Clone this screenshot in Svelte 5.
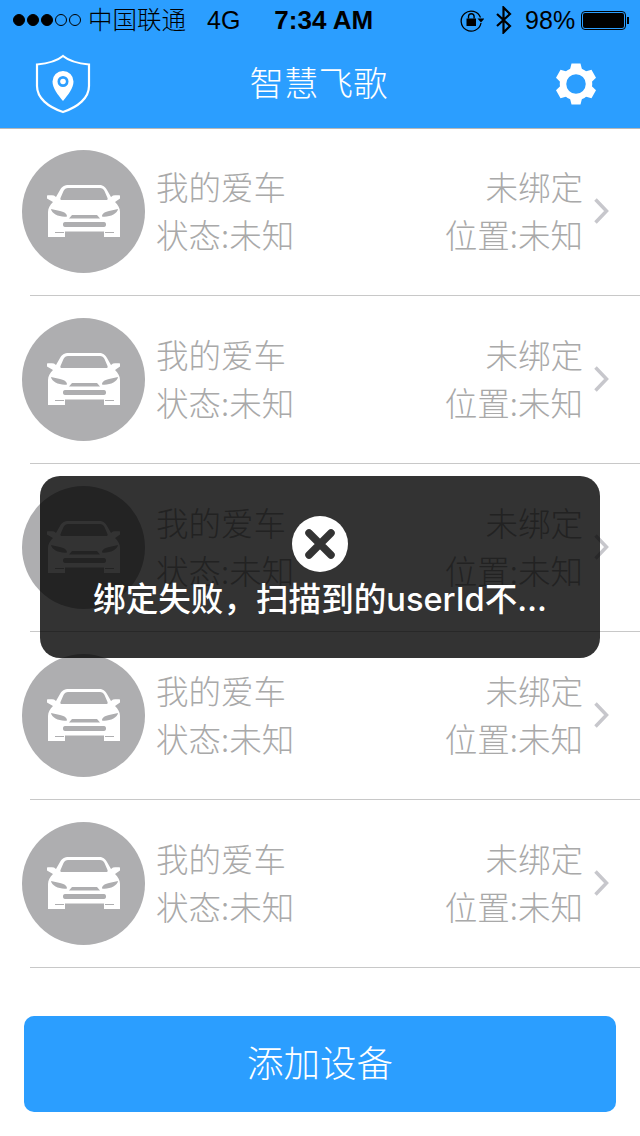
<script>
  const rows = [0, 1, 2, 3, 4];
  const teeth = [0, 60, 120, 180, 240, 300];
</script>

<div class="page">
  <header class="top">
    <div class="status">
      <div class="signal">
        <i class="on"></i><i class="on"></i><i class="on"></i><i></i><i></i>
      </div>
      <span class="carrier">中国联通</span>
      <span class="net">4G</span>
      <span class="time">7:34 AM</span>
      <svg class="lock" width="24" height="24" viewBox="0 0 24 24">
        <path d="M20.5 9.5A10 10 0 1 0 21 15" fill="none" stroke="#000" stroke-width="1.3" />
        <path d="M17.5 10.5h7l-3.500 4z" fill="#000" />
        <rect x="6.500" y="10.500" width="9.500" height="7.500" fill="#000" />
        <path d="M8.500 10.500V8.500a2.800 2.800 0 0 1 5.600 0v2" fill="none" stroke="#000" stroke-width="1.400" />
      </svg>
      <svg class="bt" width="18" height="28" viewBox="0 0 18 28">
        <path d="M2 8l13 12-6.500 6.500V1.500L15 8 2 20" fill="none" stroke="#000" stroke-width="2.200" />
      </svg>
      <span class="pct">98%</span>
      <div class="battery"><div class="cell"></div></div>
      <div class="nub"></div>
    </div>
    <nav class="bar">
      <svg class="shield" width="56" height="60" viewBox="0 0 56 60">
        <path d="M28 2c6 5 15 7.500 26 8.500V32c0 12-11 21-26 26C13 53 2 44 2 32V10.500C13 9.500 22 7 28 2z" fill="none" stroke="#fff" stroke-width="2.200" />
        <path fill-rule="evenodd" d="M28 47C23 41 17.500 34 17.500 27.500a10.500 10.500 0 0 1 21 0C38.500 34 33 41 28 47zM28 22a5.500 5.500 0 1 0 0 11 5.500 5.500 0 0 0 0-11z" fill="#fff" />
        <circle cx="28" cy="27.500" r="2.800" fill="#fff" />
      </svg>
      <h1>智慧飞歌</h1>
      <svg class="gear" width="42" height="42" viewBox="0 0 42 42">
        <circle cx="21" cy="21" r="13" fill="none" stroke="#fff" stroke-width="6.500" />
        {#each teeth as angle (angle)}
          <path d="M14.500 8.500L16.500 0.500H25.500L27.500 8.500z" fill="#fff" transform="rotate({angle} 21 21)" />
        {/each}
      </svg>
    </nav>
  </header>

  <ul class="list">
    {#each rows as row (row)}
      <li class="row">
        <div class="avatar">
          <svg width="123" height="123" viewBox="0 0 123 123">
            <path
              fill="#fff"
              fill-rule="evenodd"
              d="M47 35h30c4 0 6 1.500 8 5l4 7 2-1.500c3-.5 6-.5 7 0v3l-5 3.500c3 3 5 6 5 10v25H82V81.500H43V87H26V62c0-4 2-7 5-10l-6-3.500v-3c1-.5 4-.5 7 0l2 1.500 4-7c2-3.500 4-5 9-5zM46 38c-2 0-3.500 1-4.500 3l-3 7c-.5 1.500 0 2 1.500 2h44c1.500 0 2-.5 1.500-2l-3-7c-1-2-2.500-3-4.500-3zM29 59c.5 5 9 8.500 16 7.500 0-2.500-2-4.500-7-5.500-3-.5-6-1.500-9-2zM96 59c-3 .5-6 1.500-9 2-5 1-7 3-7 5.500 7 1 15.500-2.500 16-7.500zM50 65l-3 3.500h31L75 65zM43 72c-1.500 0-2 1-2 2.500s.5 2.500 2 2.500h39c1.500 0 2-1 2-2.500S83.500 72 82 72zM33 82h9v1h-9zM83 82h9v1h-9z"
            />
          </svg>
        </div>
        <div class="info">
          <div class="line">
            <span>我的爱车</span>
            <span>未绑定</span>
          </div>
          <div class="line">
            <span>状态:未知</span>
            <span>位置:未知</span>
          </div>
        </div>
        <svg class="chevron" width="18" height="28" viewBox="0 0 18 28">
          <path d="M3.500 2.500L14.500 14 3.500 25.500" fill="none" stroke="#c7c7cc" stroke-width="3.500" />
        </svg>
      </li>
    {/each}
  </ul>

  <button class="add">添加设备</button>

  <div class="toast">
    <div class="badge">
      <svg width="32" height="32" viewBox="0 0 32 32">
        <path d="M5 5l22 22M27 5L5 27" stroke="#333" stroke-width="7.500" stroke-linecap="round" />
      </svg>
    </div>
    <p>绑定失败，扫描到的userId不…</p>
  </div>
</div>

<style>
  :global(body) {
    background: #fff;
    font-family: "Noto Sans CJK SC", "Liberation Sans", sans-serif;
  }

  .page {
    height: 1136px;
    overflow: hidden;
    position: relative;
    width: 640px;
  }

  .top {
    background: #2b9eff;
    border-bottom: 1px solid #b8b8b8;
    height: 128px;
  }

  .status {
    align-items: center;
    color: #000;
    display: flex;
    font-family: "Liberation Sans", "Noto Sans CJK SC", sans-serif;
    font-size: 25px;
    height: 40px;
    padding-left: 13px;
  }

  .signal {
    display: flex;
    gap: 2px;
  }

  .signal i {
    border: 1px solid #000;
    border-radius: 50%;
    box-sizing: border-box;
    height: 12px;
    width: 12px;
  }

  .signal i.on {
    background: #000;
  }

  .carrier {
    font-family: "Noto Sans CJK SC", sans-serif;
    font-size: 24.5px;
    font-weight: 300;
    margin: 0 0 4px 7px;
  }

  .net {
    margin-left: 21px;
  }

  .time {
    font-size: 26px;
    font-weight: 700;
    margin-left: 34px;
  }

  .lock {
    margin-left: 87px;
  }

  .bt {
    margin-left: 11px;
  }

  .pct {
    margin-left: 12px;
  }

  .battery {
    border: 1px solid #000;
    border-radius: 4px;
    box-sizing: border-box;
    height: 19px;
    margin-left: 6px;
    padding: 1px;
    width: 45px;
  }

  .cell {
    background: #000;
    border-radius: 2px;
    height: 100%;
  }

  .nub {
    background: #000;
    height: 7px;
    margin-left: 1px;
    width: 2px;
  }

  .bar {
    align-items: center;
    display: grid;
    grid-template-columns: 1fr auto 1fr;
    height: 87px;
    padding: 0 43px 0 35px;
  }

  .gear {
    justify-self: end;
  }

  h1 {
    color: #fff;
    font-size: 34.5px;
    font-weight: 300;
    margin: 0 0 6px 5px;
  }

  .list {
    list-style: none;
    margin: 0;
    padding: 0;
  }

  .row {
    align-items: center;
    box-sizing: border-box;
    display: flex;
    height: 168px;
    padding: 0 30px 4px 22px;
    position: relative;
  }

  .row::after {
    background: #c8c8c8;
    bottom: 1px;
    content: "";
    height: 1px;
    left: 30px;
    position: absolute;
    right: 0;
  }

  .avatar {
    background: #aeaeb0;
    border-radius: 50%;
    flex: none;
    height: 123px;
    width: 123px;
  }

  .avatar svg {
    display: block;
  }

  .info {
    color: #a9a9a9;
    flex: 1;
    font-size: 32.5px;
    font-weight: 300;
    line-height: 48px;
    margin: 0 0 2px 11px;
  }

  .line {
    display: flex;
    justify-content: space-between;
  }

  .chevron {
    flex: none;
    margin-left: 9px;
  }

  .add {
    background: #2b9eff;
    border: 0;
    border-radius: 10px;
    color: #fff;
    display: block;
    font-family: inherit;
    font-size: 36.5px;
    font-weight: 300;
    height: 96px;
    margin: 47px 24px 0;
    padding: 0 0 6px;
    width: 592px;
  }

  .toast {
    align-items: center;
    background: rgba(0, 0, 0, 0.8);
    border-radius: 20px;
    box-sizing: border-box;
    display: flex;
    flex-direction: column;
    height: 182px;
    left: 40px;
    padding-top: 40px;
    position: absolute;
    top: 476px;
    width: 560px;
  }

  .badge {
    align-items: center;
    background: #fff;
    border-radius: 50%;
    display: flex;
    height: 56px;
    justify-content: center;
    width: 56px;
  }

  .toast p {
    color: #fff;
    font-family: Inter, "Noto Sans CJK SC", sans-serif;
    font-size: 32.6px;
    font-weight: 500;
    line-height: 48px;
    margin: 3px 0 0;
    white-space: nowrap;
  }
</style>
